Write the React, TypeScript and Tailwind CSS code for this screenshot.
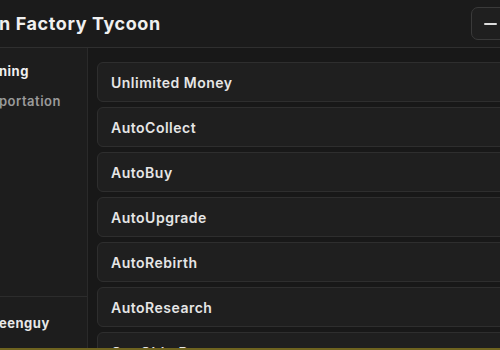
import React from "react";

const items = [
  "Unlimited Money",
  "AutoCollect",
  "AutoBuy",
  "AutoUpgrade",
  "AutoRebirth",
  "AutoResearch",
  "Get ObbyBoosts",
];

export default function App() {
  return (
    <div
      className="w-[500px] h-[350px] overflow-hidden bg-[#1a1a1a] flex flex-col"
      style={{ fontFamily: "Inter, 'Noto Sans', sans-serif" }}
    >
      <div className="h-[348px] flex flex-col overflow-hidden">
        <div className="h-[48px] shrink-0 flex items-center justify-between border-b border-[#2f2f2f] bg-[#1b1b1b]">
          <div className="ml-[-1px] text-[18px] font-bold text-[#f0f0f0] tracking-[0.6px]">
            n Factory Tycoon
          </div>
          <div className="mr-[-12px] w-[41px] h-[33px] rounded-[7px] border border-[#3a3a3a] bg-[#1f1f1f] flex items-center pl-[12px]">
            <div className="w-[13px] h-[2px] rounded-full bg-[#dcdcdc]" />
          </div>
        </div>
        <div className="flex flex-1 min-h-0">
          <div className="w-[88px] shrink-0 bg-[#1d1d1d] border-r border-[#2a2a2a] flex flex-col">
            <div className="flex-1 flex flex-col pt-[15px] gap-[13px]">
              <div className="text-[13px] font-bold text-[#f0f0f0] ml-[-1px] leading-[17px] tracking-[0.5px]">ning</div>
              <div className="text-[13px] font-semibold text-[#9a9a9a] ml-[-1px] leading-[17px] tracking-[0.5px]">portation</div>
            </div>
            <div className="h-[52px] shrink-0 border-t border-[#2c2c2c] pt-[18px]">
              <div className="text-[13px] font-bold text-[#e8e8e8] ml-[-1px] leading-[17px] tracking-[0.5px]">eenguy</div>
            </div>
          </div>
          <div className="flex-1 bg-[#181818] pl-[9px] pt-[14px] flex flex-col gap-[5px] overflow-hidden">
            {items.map((t) => (
              <div
                key={t}
                className="h-[40px] shrink-0 mr-[-10px] rounded-[6px] border border-[#2e2e2e] bg-[#1f1f1f] flex items-center pl-[13px] text-[14px] font-semibold text-[#e6e6e6] tracking-[0.5px]"
              >
                {t}
              </div>
            ))}
          </div>
        </div>
      </div>
      <div className="h-[2px] bg-[#6e631f]" />
    </div>
  );
}
